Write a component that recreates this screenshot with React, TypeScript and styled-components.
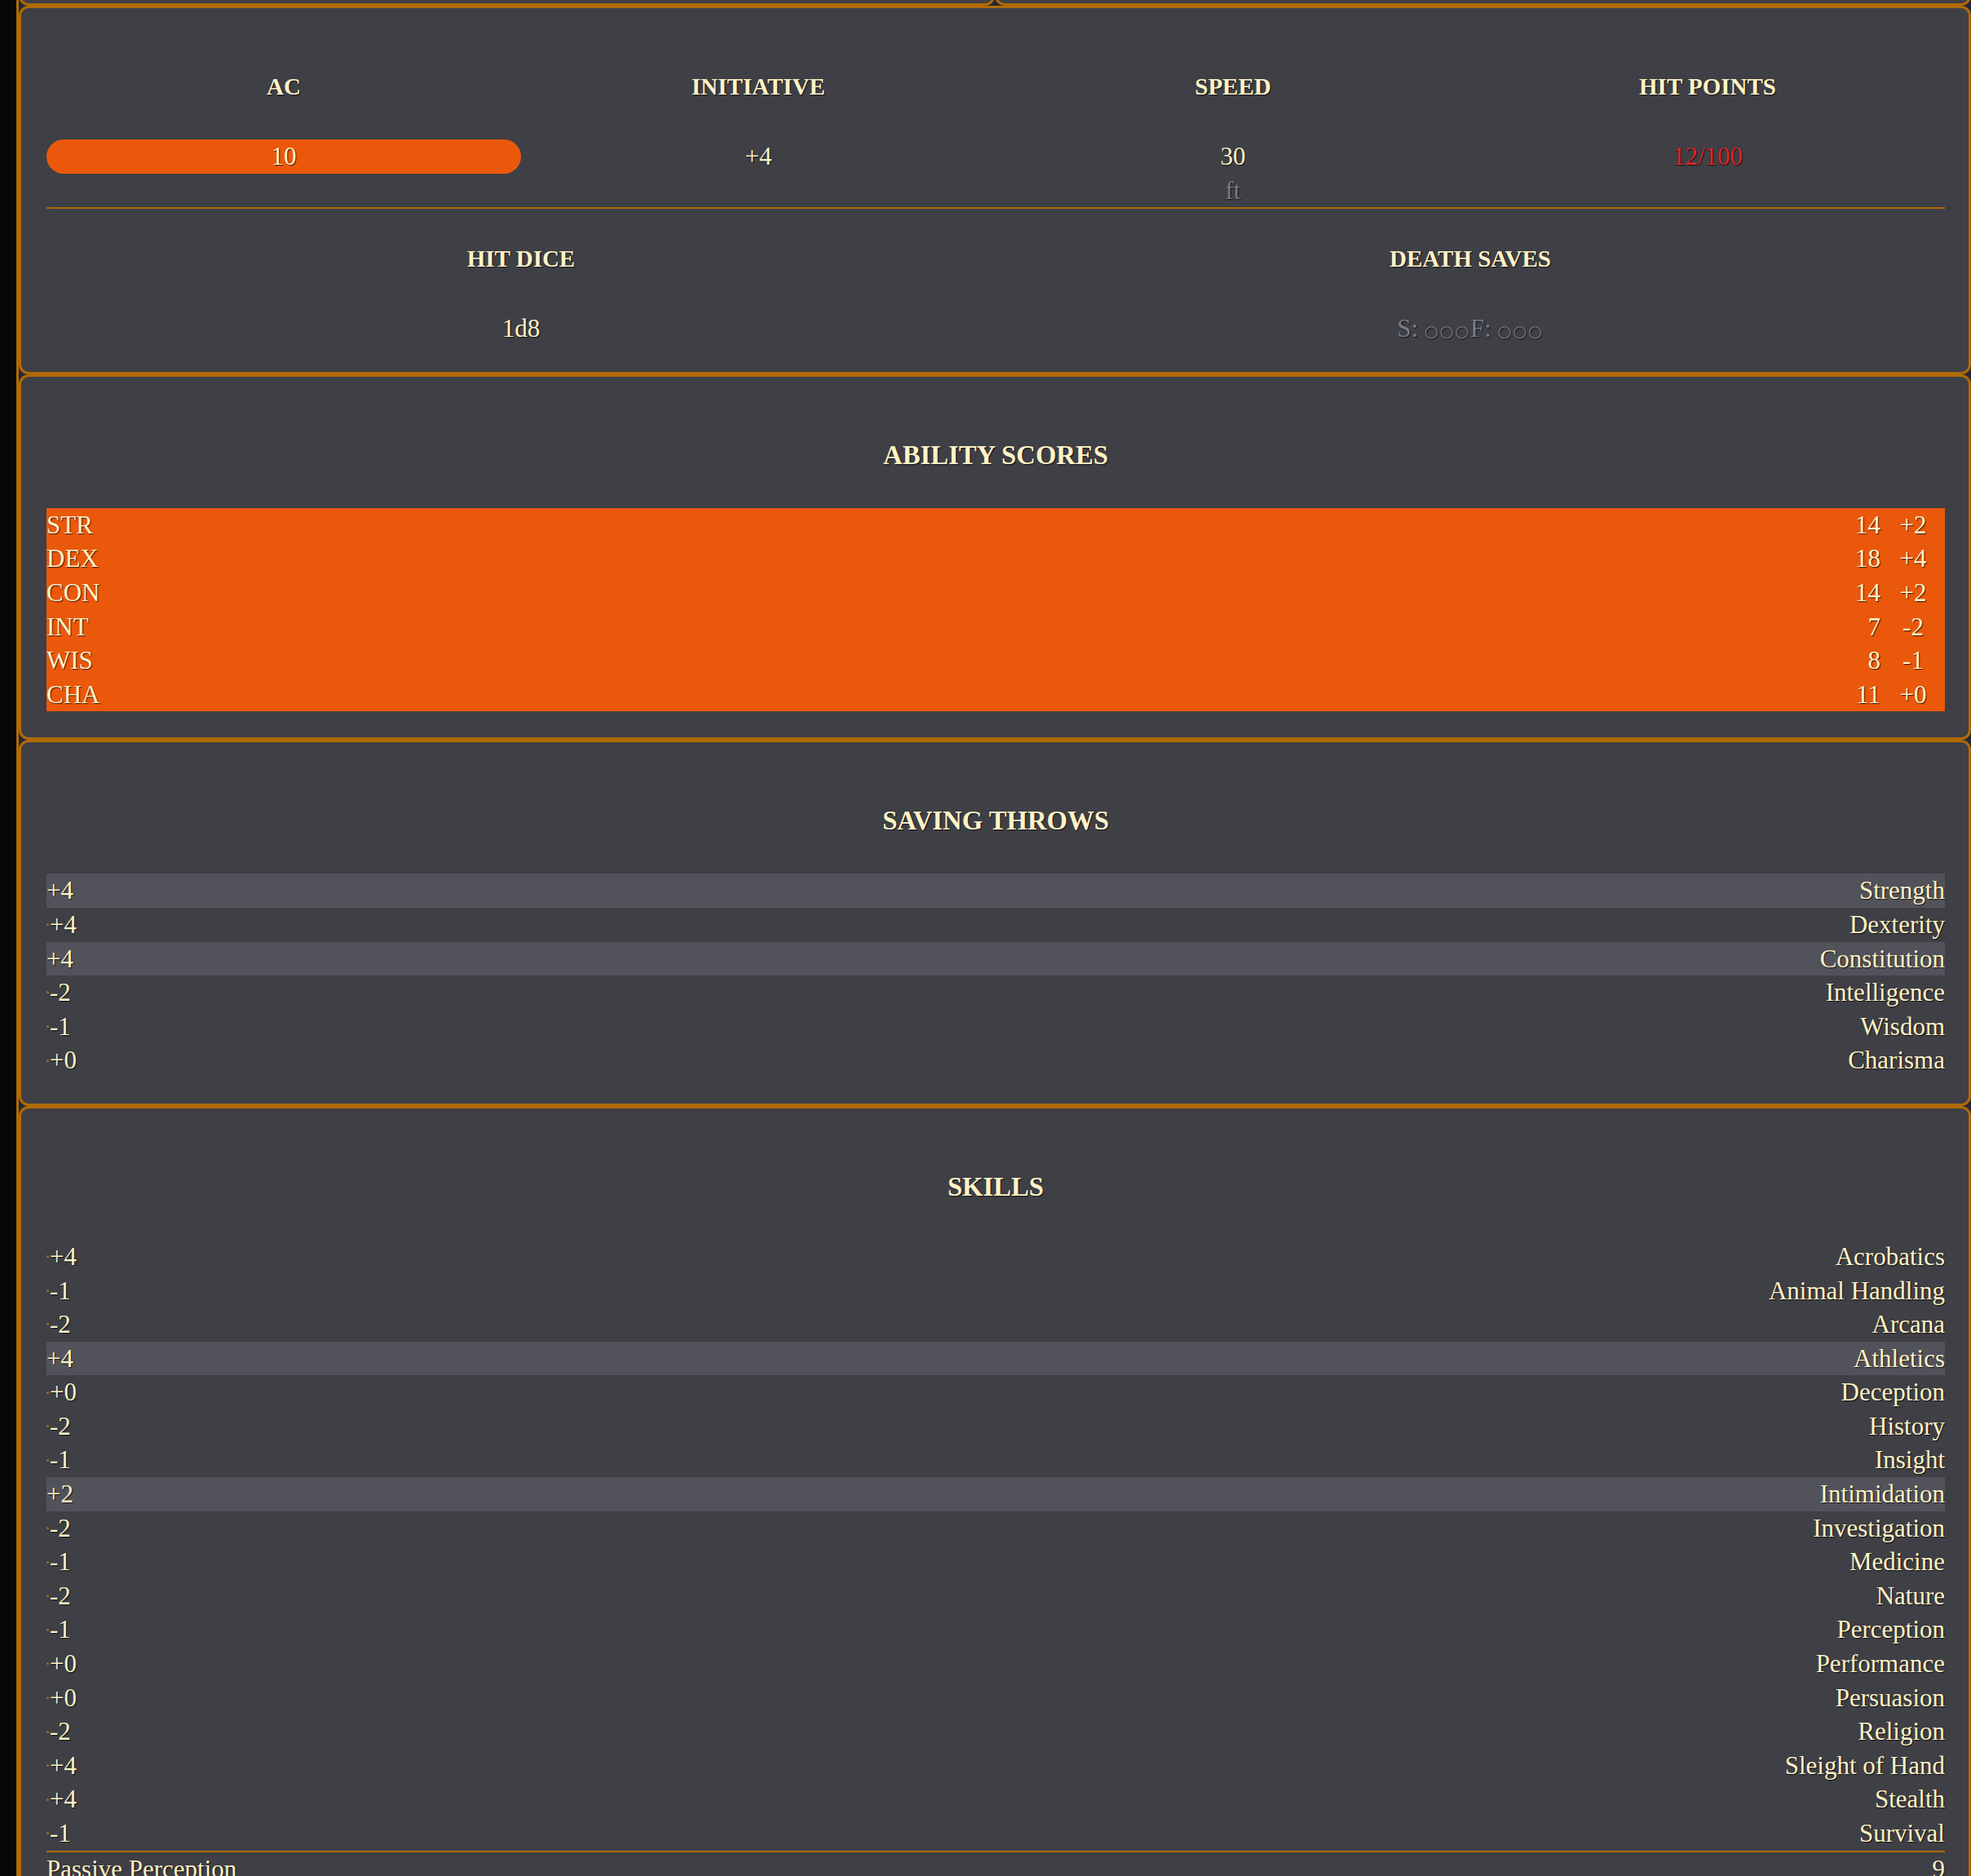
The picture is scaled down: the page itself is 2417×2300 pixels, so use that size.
import React from 'react';
import styled, { createGlobalStyle } from 'styled-components';

const ORANGE = '#b06b06';
const FILL = '#ea580c';
const PANEL = '#3f3f46';
const HIGHLIGHT = '#52525b';
const CREAM = '#fef3c7';
const MUTED = '#7c7c85';
const DANGER = '#dc2626';

const GlobalStyle = createGlobalStyle`
  html, body {
    margin: 0;
    padding: 0;
    background: #070707;
  }
  body {
    font-family: "Liberation Serif", "Times New Roman", serif;
    color: ${CREAM};
  }
  *, *::before, *::after {
    box-sizing: border-box;
  }
`;

const Page = styled.div`
  display: flex;
  height: 100vh;
  overflow: hidden;
  background: #070707;
`;

const Sidebar = styled.aside`
  flex: 0 0 20px;
  background: #070707;
`;

const Main = styled.main`
  flex: 1;
  min-width: 0;
  display: flex;
  flex-direction: column;
  background: #262837;
  border-left: 3px solid ${ORANGE};
  text-shadow: 1px 1px 1px rgba(0, 0, 0, 0.75);
`;

const TopRow = styled.div`
  flex-shrink: 0;
  display: grid;
  grid-template-columns: 1fr 1fr;
  margin-top: -53px;
`;

const Stub = styled.div`
  height: 60px;
  background: ${PANEL};
  border: 3px solid ${ORANGE};
  border-radius: 12px;
`;

const Panel = styled.section`
  flex-shrink: 0;
  background: ${PANEL};
  border: 3px solid ${ORANGE};
  border-radius: 12px;
  padding: 32px 29px 32px 31px;
`;

const SectionTitle = styled.h2`
  margin: 32px 0 33px;
  font-size: 32.7px;
  line-height: 64px;
  font-weight: 700;
  text-align: center;
  text-transform: uppercase;
`;

const StatGrid = styled.div<{ $cols: number; $top: number; $divider?: boolean }>`
  display: grid;
  grid-template-columns: repeat(${(p) => p.$cols}, 1fr);
  padding-top: ${(p) => p.$top}px;
  border-bottom: ${(p) => (p.$divider ? `2px solid ${ORANGE}` : 'none')};
`;

const StatCell = styled.div`
  display: flex;
  flex-direction: column;
  align-items: center;
  text-align: center;
`;

const StatLabel = styled.div`
  align-self: stretch;
  margin-bottom: 33px;
  font-size: 29px;
  line-height: 64px;
  font-weight: 700;
  text-transform: uppercase;
`;

const StatValue = styled.div<{ $tone?: 'default' | 'danger' | 'muted' }>`
  font-size: 31px;
  line-height: 41.6px;
  color: ${(p) => (p.$tone === 'danger' ? DANGER : p.$tone === 'muted' ? MUTED : CREAM)};
`;

const Pill = styled(StatValue)`
  align-self: stretch;
  background: ${FILL};
  border-radius: 999px;
`;

const Circles = styled.span`
  font-family: "DejaVu Sans", sans-serif;
  font-size: 19.5px;
  line-height: 1;
  letter-spacing: 1.7px;
`;

const AbilityList = styled.div`
  background: ${FILL};
`;

const AbilityRow = styled.div`
  display: flex;
  align-items: center;
  padding-right: 15px;
  font-size: 31px;
  line-height: 41.6px;
`;

const AbilityName = styled.span`
  flex: 1;
`;

const AbilityScore = styled.span`
  text-align: right;
`;

const AbilityMod = styled.span`
  width: 48px;
  margin-left: 16px;
  text-align: center;
`;

const CheckRow = styled.div<{ $proficient?: boolean }>`
  display: flex;
  justify-content: space-between;
  align-items: center;
  font-size: 31px;
  line-height: 41.6px;
  background: ${(p) => (p.$proficient ? HIGHLIGHT : 'transparent')};
`;

const RowValue = styled.span`
  display: inline-flex;
  align-items: center;
`;

const Marker = styled.span`
  display: inline-block;
  width: 3px;
  height: 3px;
  margin-right: 1px;
  border-radius: 50%;
  background: ${ORANGE};
`;

const PassiveRow = styled(CheckRow)`
  border-top: 2px solid ${ORANGE};
`;

const abilities = [
  { name: 'STR', score: 14, mod: '+2' },
  { name: 'DEX', score: 18, mod: '+4' },
  { name: 'CON', score: 14, mod: '+2' },
  { name: 'INT', score: 7, mod: '-2' },
  { name: 'WIS', score: 8, mod: '-1' },
  { name: 'CHA', score: 11, mod: '+0' },
];

const saves = [
  { name: 'Strength', value: '+4', prof: true },
  { name: 'Dexterity', value: '+4', prof: false },
  { name: 'Constitution', value: '+4', prof: true },
  { name: 'Intelligence', value: '-2', prof: false },
  { name: 'Wisdom', value: '-1', prof: false },
  { name: 'Charisma', value: '+0', prof: false },
];

const skills = [
  { name: 'Acrobatics', value: '+4', prof: false },
  { name: 'Animal Handling', value: '-1', prof: false },
  { name: 'Arcana', value: '-2', prof: false },
  { name: 'Athletics', value: '+4', prof: true },
  { name: 'Deception', value: '+0', prof: false },
  { name: 'History', value: '-2', prof: false },
  { name: 'Insight', value: '-1', prof: false },
  { name: 'Intimidation', value: '+2', prof: true },
  { name: 'Investigation', value: '-2', prof: false },
  { name: 'Medicine', value: '-1', prof: false },
  { name: 'Nature', value: '-2', prof: false },
  { name: 'Perception', value: '-1', prof: false },
  { name: 'Performance', value: '+0', prof: false },
  { name: 'Persuasion', value: '+0', prof: false },
  { name: 'Religion', value: '-2', prof: false },
  { name: 'Sleight of Hand', value: '+4', prof: false },
  { name: 'Stealth', value: '+4', prof: false },
  { name: 'Survival', value: '-1', prof: false },
];

type Check = { name: string; value: string; prof: boolean };

const CheckList: React.FC<{ items: Check[] }> = ({ items }) => (
  <div>
    {items.map((it) => (
      <CheckRow key={it.name} $proficient={it.prof}>
        <RowValue>
          {!it.prof && <Marker />}
          {it.value}
        </RowValue>
        <span>{it.name}</span>
      </CheckRow>
    ))}
  </div>
);

export default function App() {
  return (
    <>
      <GlobalStyle />
      <Page>
        <Sidebar />
        <Main>
          <TopRow>
            <Stub />
            <Stub />
          </TopRow>

          <Panel>
            <StatGrid $cols={4} $top={32} $divider>
              <StatCell>
                <StatLabel>AC</StatLabel>
                <Pill>10</Pill>
              </StatCell>
              <StatCell>
                <StatLabel>Initiative</StatLabel>
                <StatValue>+4</StatValue>
              </StatCell>
              <StatCell>
                <StatLabel>Speed</StatLabel>
                <StatValue>30</StatValue>
                <StatValue $tone="muted">ft</StatValue>
              </StatCell>
              <StatCell>
                <StatLabel>Hit Points</StatLabel>
                <StatValue $tone="danger">12/100</StatValue>
              </StatCell>
            </StatGrid>
            <StatGrid $cols={2} $top={29}>
              <StatCell>
                <StatLabel>Hit Dice</StatLabel>
                <StatValue>1d8</StatValue>
              </StatCell>
              <StatCell>
                <StatLabel>Death Saves</StatLabel>
                <StatValue $tone="muted">
                  S: <Circles>○○○</Circles>F: <Circles>○○○</Circles>
                </StatValue>
              </StatCell>
            </StatGrid>
          </Panel>

          <Panel>
            <SectionTitle>Ability Scores</SectionTitle>
            <AbilityList>
              {abilities.map((a) => (
                <AbilityRow key={a.name}>
                  <AbilityName>{a.name}</AbilityName>
                  <AbilityScore>{a.score}</AbilityScore>
                  <AbilityMod>{a.mod}</AbilityMod>
                </AbilityRow>
              ))}
            </AbilityList>
          </Panel>

          <Panel>
            <SectionTitle>Saving Throws</SectionTitle>
            <CheckList items={saves} />
          </Panel>

          <Panel>
            <SectionTitle>Skills</SectionTitle>
            <CheckList items={skills} />
            <PassiveRow>
              <span>Passive Perception</span>
              <span>9</span>
            </PassiveRow>
          </Panel>
        </Main>
      </Page>
    </>
  );
}
